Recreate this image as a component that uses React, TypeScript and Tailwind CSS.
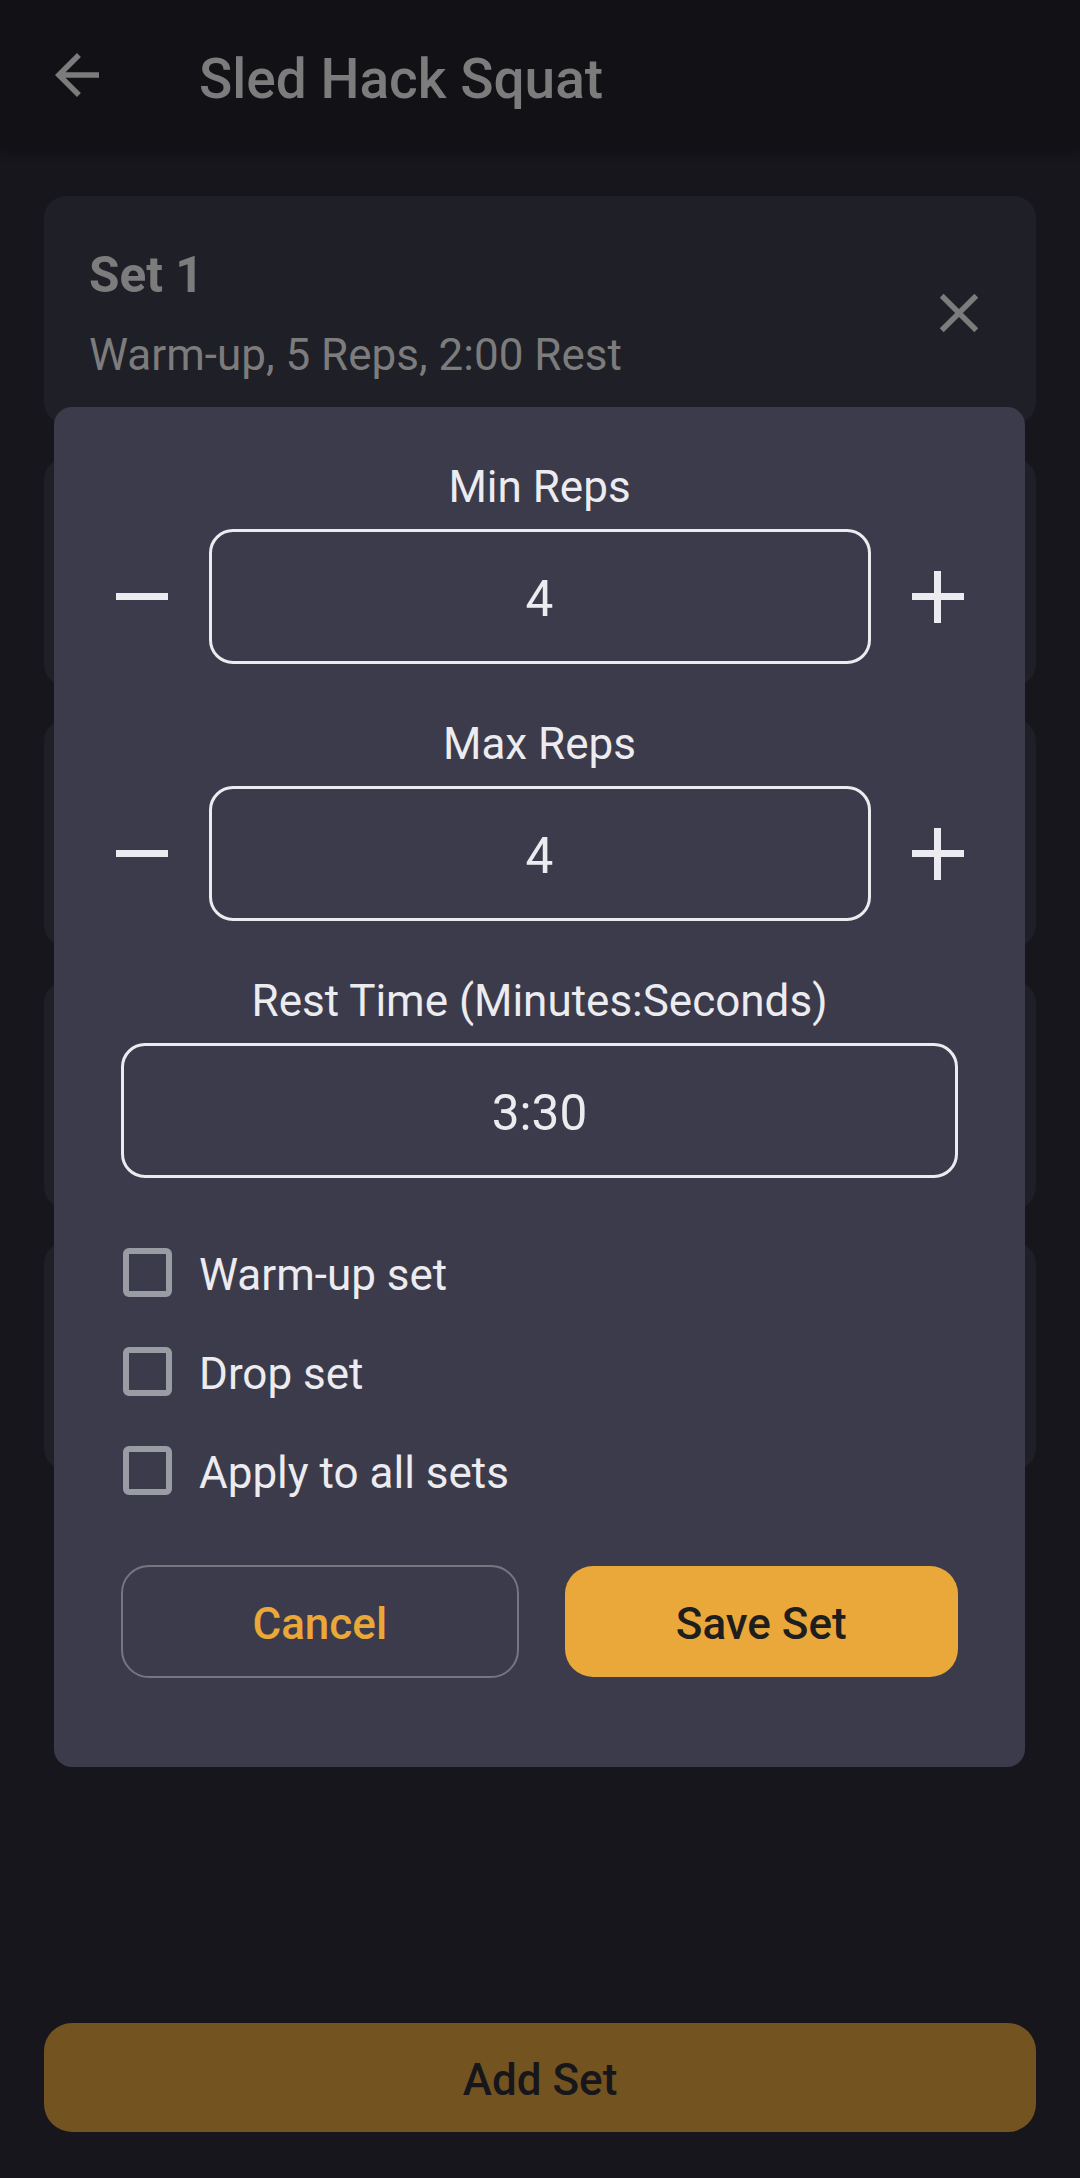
import { useState } from "react";

const sets = [
  { n: 1, desc: "Warm-up, 5 Reps, 2:00 Rest" },
  { n: 2, desc: "4 Reps, 3:30 Rest" },
  { n: 3, desc: "4 Reps, 3:30 Rest" },
  { n: 4, desc: "4 Reps, 3:30 Rest" },
  { n: 5, desc: "4 Reps, 3:30 Rest" },
];

function Minus() {
  return <div className="shrink-0 w-[52px] h-[7px] bg-[#ececf0]" />;
}

function PlusIcon() {
  return (
    <div className="relative shrink-0 w-[52px] h-[52px]">
      <div className="absolute left-0 top-[22.5px] w-[52px] h-[7px] bg-[#ececf0]" />
      <div className="absolute top-0 left-[22.5px] w-[7px] h-[52px] bg-[#ececf0]" />
    </div>
  );
}

function Stepper({ label, value }: { label: string; value: string }) {
  return (
    <>
      <div className="text-[44px] leading-[52px] text-center text-[#ececf0]">{label}</div>
      <div className="mt-[16px] -mx-[6px] flex items-center justify-center gap-[41px]">
        <Minus />
        <div className="shrink-0 w-[662px] h-[135px] pt-[5px] rounded-[24px] border-[3px] border-[#ececf0] flex items-center justify-center text-[49.5px] text-[#ececf0]">
          {value}
        </div>
        <PlusIcon />
      </div>
    </>
  );
}

function Check({ label }: { label: string }) {
  return (
    <div className="h-[99px] flex items-center gap-[27px]">
      <div className="w-[49px] h-[49px] rounded-[6px] border-[6px] border-[#9a9ca4]" />
      <span className="pt-[5px] text-[44px] text-[#ececf0]">{label}</span>
    </div>
  );
}

export default function App() {
  const [open] = useState(true);

  return (
    <div
      className="relative w-[1080px] min-h-[2178px] bg-[#17161c] flex flex-col"
      style={{ fontFamily: "Roboto, 'Noto Sans', sans-serif" }}
    >
      {/* top bar */}
      <div className="h-[150px] bg-[#121216] flex items-center shadow-[0_4px_8px_rgba(0,0,0,0.25)]">
        <svg className="ml-[44px]" width="66" height="66" viewBox="0 0 24 24" fill="#7c7c7c">
          <path d="M20 11H7.83l5.59-5.59L12 4l-8 8 8 8 1.41-1.41L7.83 13H20v-2z" />
        </svg>
        <span className="ml-[89px] mt-[8px] text-[55px] leading-[64px] font-medium text-[#7c7c7c]">Sled Hack Squat</span>
      </div>

      {/* set list */}
      <div className="flex-1 px-[44px] pt-[46px] flex flex-col gap-[33.5px]">
        {sets.map(s => (
          <div key={s.n} className="h-[228px] rounded-[22px] bg-[#1f1f27] flex items-center pl-[45px] pr-[44px]">
            <div className="flex-1 flex flex-col mt-[7px]">
              <span className="text-[49.5px] leading-[58px] font-bold text-[#7c7c7c]">Set {s.n}</span>
              <span className="mt-[25px] text-[44px] leading-[52px] text-[#7c7c7c]">{s.desc}</span>
            </div>
            <svg className="mt-[6px]" width="66" height="66" viewBox="0 0 24 24" fill="#7c7c7c">
              <path d="M19 6.41L17.59 5 12 10.59 6.41 5 5 6.41 10.59 12 5 17.59 6.41 19 12 13.41 17.59 19 19 17.59 13.41 12z" />
            </svg>
          </div>
        ))}
      </div>

      <div className="px-[44px] pb-[46px]">
        <button className="w-full h-[109px] pt-[5px] rounded-[28px] bg-[#735320] text-[44px] font-medium text-[#17161b]">
          Add Set
        </button>
      </div>

      {/* edit set dialog */}
      {open && (
        <div className="absolute left-[54px] top-[407px] w-[971px] h-[1360px] rounded-[18px] bg-[#3c3b4b] pt-[54px] px-[67px] flex flex-col">
          <Stepper label="Min Reps" value="4" />
          <div className="mt-[54px]">
            <Stepper label="Max Reps" value="4" />
          </div>
          <div className="mt-[54px] text-[44px] leading-[52px] text-center text-[#ececf0]">Rest Time (Minutes:Seconds)</div>
          <div className="mt-[16px] h-[135px] pt-[5px] rounded-[24px] border-[3px] border-[#ececf0] flex items-center justify-center text-[49.5px] text-[#ececf0]">
            3:30
          </div>
          <div className="mt-[45px] flex flex-col pl-[2px]">
            <Check label="Warm-up set" />
            <Check label="Drop set" />
            <Check label="Apply to all sets" />
          </div>
          <div className="mt-[45px] flex gap-[46px]">
            <button className="flex-1 h-[113px] pt-[4px] rounded-[28px] border-[2.5px] border-[#77757f] text-[44px] font-medium text-[#e9a838]">
              Cancel
            </button>
            <button className="flex-1 h-[111px] pt-[4px] mt-[1px] rounded-[28px] bg-[#eaa83b] text-[44px] font-medium text-[#1e1e1e]">
              Save Set
            </button>
          </div>
        </div>
      )}
    </div>
  );
}
